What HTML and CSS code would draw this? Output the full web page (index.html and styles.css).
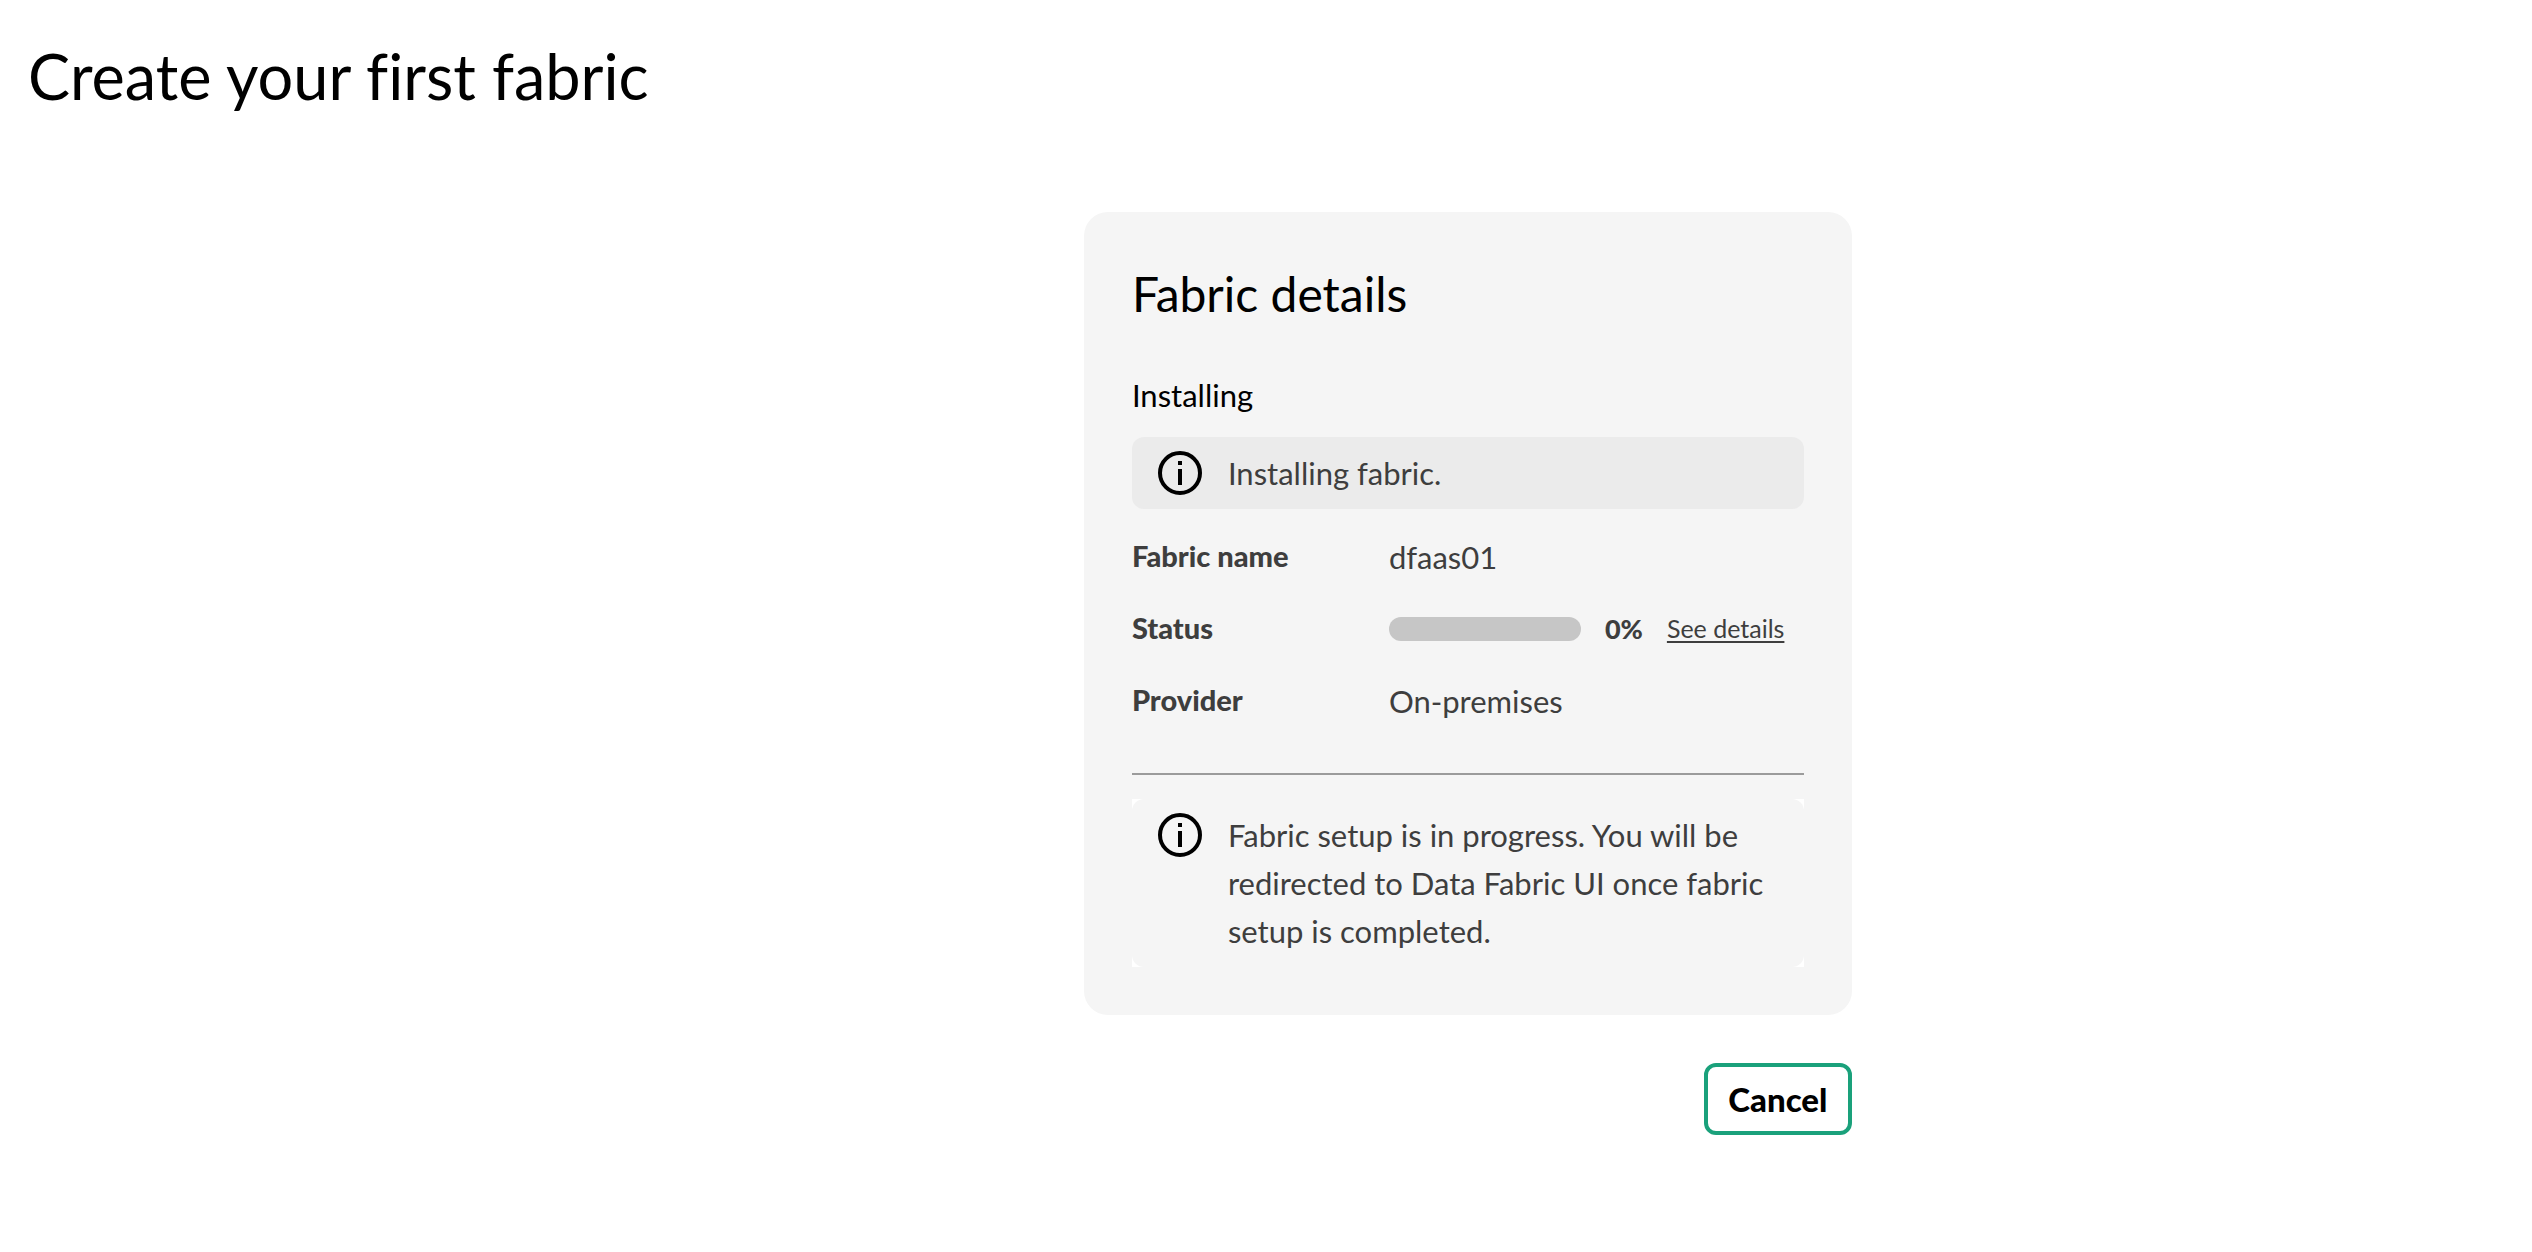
FILE: index.html
```html
<!DOCTYPE html>
<html lang="en">
<head>
<meta charset="utf-8">
<meta name="viewport" content="width=device-width, initial-scale=1">
<title>Create your first fabric</title>
<link rel="stylesheet" href="styles.css">
</head>
<body>
<header class="page-header">
  <h1>Create your first fabric</h1>
</header>
<main class="layout">
  <div class="panel">
    <section class="card">
      <h2>Fabric details</h2>
      <h3>Installing</h3>
      <div class="notice notice-shaded" role="status">
        <svg class="icon" viewBox="0 0 24 24" aria-hidden="true"><path d="M12 22c5.523 0 10-4.477 10-10S17.523 2 12 2 2 6.477 2 12s4.477 10 10 10zm0-12v8m0-12v2" fill="none" stroke="currentColor" stroke-width="2"/></svg>
        <p>Installing fabric.</p>
      </div>
      <dl class="details">
        <dt>Fabric name</dt>
        <dd>dfaas01</dd>
        <dt id="status-label">Status</dt>
        <dd class="status">
          <progress class="meter" value="0" max="100" aria-labelledby="status-label"></progress>
          <strong>0%</strong>
          <a href="#details">See details</a>
        </dd>
        <dt>Provider</dt>
        <dd>On-premises</dd>
      </dl>
      <hr>
      <div class="notice-frame">
        <div class="notice notice-plain">
          <svg class="icon" viewBox="0 0 24 24" aria-hidden="true"><path d="M12 22c5.523 0 10-4.477 10-10S17.523 2 12 2 2 6.477 2 12s4.477 10 10 10zm0-12v8m0-12v2" fill="none" stroke="currentColor" stroke-width="2"/></svg>
          <p>Fabric setup is in progress. You will be redirected to Data Fabric UI once fabric setup is completed.</p>
        </div>
      </div>
    </section>
    <button class="cancel" type="button">Cancel</button>
  </div>
</main>
</body>
</html>
```
FILE: styles.css
```css
*, *::before, *::after {
  box-sizing: border-box;
}

body {
  margin: 0;
  background: #fff;
  color: #000;
  font-family: Lato, "Open Sans", sans-serif;
  font-size: 31px;
  line-height: 48px;
  font-variant-ligatures: none;
}

h1, h2, h3, p, dl, dd {
  margin: 0;
}

h1, h2, h3 {
  font-weight: 400;
}

.page-header {
  padding: 40px 28px 100px;
}

h1 {
  font-size: 63px;
  line-height: 72px;
}

.layout {
  display: grid;
  grid-template-columns: 51fr minmax(0, 768px) 32fr;
}

.panel {
  grid-column: 2;
  display: flex;
  flex-direction: column;
  gap: 48px;
}

.card {
  padding: 48px;
  border-radius: 24px;
  background: #f5f5f5;
}

h2 {
  font-size: 48px;
  line-height: 68px;
}

h3 {
  margin: 43px 0 18px;
  font-size: 31px;
  line-height: 48px;
}

.notice {
  display: flex;
  align-items: flex-start;
  gap: 24px;
  padding: 12px 24px;
  border-radius: 12px;
  color: #3e3e3e;
}

.notice-shaded {
  background: #ebebeb;
}

.notice-frame {
  background: #fff;
}

.notice-plain {
  background: #f5f5f5;
}

.icon {
  flex: none;
  width: 48px;
  height: 48px;
  color: #000;
}

.details {
  display: grid;
  grid-template-columns: 233px 1fr;
  column-gap: 24px;
  row-gap: 24px;
  padding: 24px 0 48px;
  color: #3e3e3e;
}

.details dt {
  font-size: 29px;
  font-weight: 900;
  line-height: 46px;
}

.status {
  display: flex;
  align-items: center;
  gap: 24px;
}

.status strong {
  font-size: 27px;
  font-weight: 900;
}

.status a {
  color: inherit;
  font-size: 25px;
  line-height: 46px;
  padding-bottom: 2px;
  text-underline-offset: 3px;
  text-decoration-thickness: 2px;
  text-decoration-skip-ink: none;
}

.meter {
  appearance: none;
  width: 192px;
  height: 24px;
  border: 0;
  border-radius: 12px;
  background: #c6c6c6;
  overflow: hidden;
}

.meter::-webkit-progress-bar {
  background: #c6c6c6;
}

.meter::-webkit-progress-value {
  background: #17a17b;
}

hr {
  height: 2px;
  margin: 0 0 24px;
  border: 0;
  background: #9b9b9b;
}

.cancel {
  align-self: flex-end;
  min-width: 148px;
  padding: 8px 16px;
  border: 4px solid #1aa17b;
  border-radius: 12px;
  background: #fff;
  color: #000;
  font: inherit;
  font-size: 33px;
  font-weight: 900;
  line-height: 48px;
}
```
